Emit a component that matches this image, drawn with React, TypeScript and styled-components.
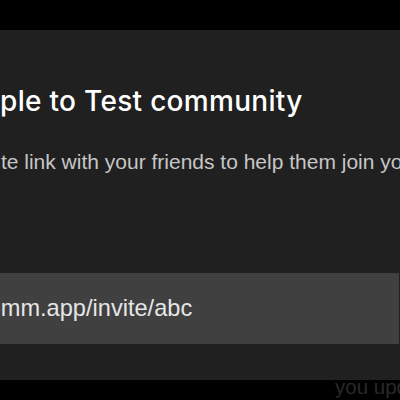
import React from "react";
import styled, { createGlobalStyle } from "styled-components";

const GlobalStyle = createGlobalStyle`
	html,
	body {
		margin: 0;
		padding: 0;
		background: #000000;
		overflow: hidden;
	}

	body {
		font-family: "Liberation Sans", Arial, sans-serif;
	}
`;

const App = () => {
	return (
		<>
			<GlobalStyle />
			<Screen>
				<Modal>
					<Title>Invite people to Test community</Title>
					<Subtitle>Share this invite link with your friends to help them join your community.</Subtitle>
					<LinkField>https://comm.app/invite/abc</LinkField>
				</Modal>
				<BehindText>you update your profile</BehindText>
			</Screen>
		</>
	);
};

export default App;

const Screen = styled.div`
	width: 400px;
	height: 400px;
	padding-top: 30px;
	box-sizing: border-box;
	overflow: hidden;
`;

const Modal = styled.div`
	margin-left: -163px;
	width: 594px;
	padding: 54px 32px 36px;
	box-sizing: border-box;
	background: #202020;
	display: flex;
	flex-direction: column;
`;

const Title = styled.h1`
	margin: 0 0 0 -3px;
	color: #ffffff;
	font-family: Inter, "Liberation Sans", sans-serif;
	font-size: 28px;
	font-weight: 500;
	letter-spacing: 0.3px;
	line-height: 34px;
	white-space: nowrap;
`;

const Subtitle = styled.p`
	margin: 30px 0 0;
	color: #c6c6c6;
	font-size: 21px;
	line-height: 28px;
	white-space: nowrap;
`;

const LinkField = styled.div`
	margin-top: 97px;
	height: 71px;
	padding-left: 36px;
	background: #404040;
	color: #e6e6e6;
	font-size: 23.6px;
	line-height: 71px;
	white-space: nowrap;
	overflow: hidden;
`;

const BehindText = styled.div`
	margin-left: 335px;
	color: #292929;
	font-size: 20.5px;
	line-height: 13px;
	white-space: nowrap;
`;
